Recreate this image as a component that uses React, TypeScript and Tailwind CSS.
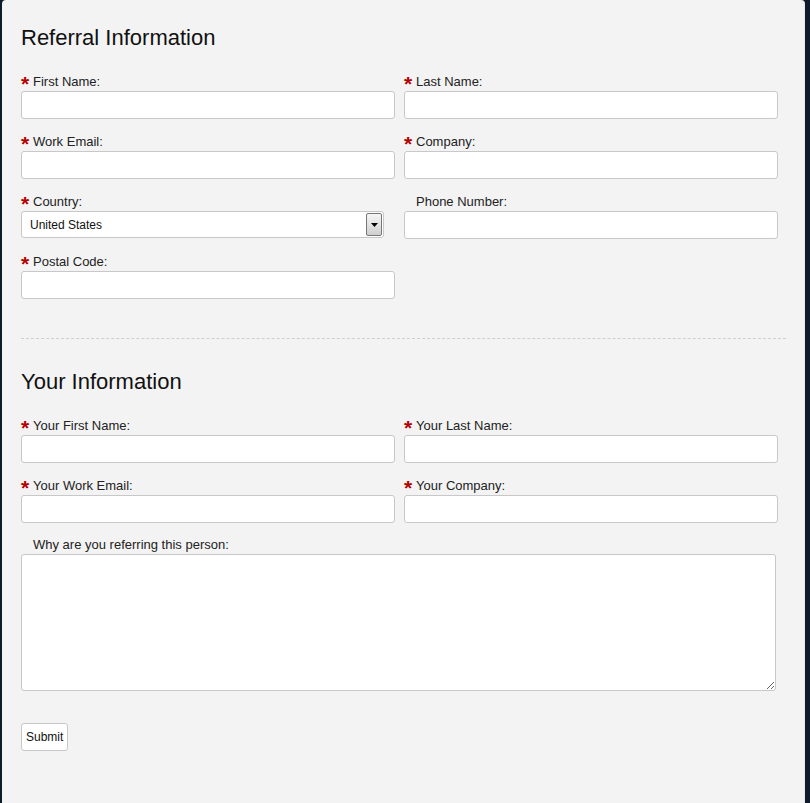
import { ReactNode } from 'react';

const font = { fontFamily: '"Liberation Sans", Arial, sans-serif' };

function Label({ text, required = true }: { text: string; required?: boolean }) {
  return (
    <div className="flex h-[14px] items-center text-[13px] leading-[14px] text-[#222]">
      <span className={`w-[12px] translate-y-[2px] text-[21px] leading-[14px] font-bold text-[#b30000] ${required ? '' : 'invisible'}`}>*</span>
      <span>{text}</span>
    </div>
  );
}

function Field({ label, required = true, children }: { label: string; required?: boolean; children?: ReactNode }) {
  return (
    <div className="flex flex-col gap-[2px]">
      <Label text={label} required={required} />
      {children ?? <input className="h-[28px] w-full rounded-[3px] border border-[#c8c8c8] bg-white outline-none" />}
    </div>
  );
}

function CountrySelect() {
  return (
    <div className="flex h-[27px] w-[363px] items-center justify-between rounded-[3px] border border-[#c8c8c8] bg-white pl-[8px] pr-[1px]">
      <span className="text-[12px] text-[#111]">United States</span>
      <div className="flex h-[23px] w-[16px] items-center justify-center rounded-[2px] border border-[#777] bg-gradient-to-b from-[#f6f6f6] to-[#cfcfcf]">
        <svg width="7" height="4" viewBox="0 0 7 4">
          <path d="M0 0h7L3.5 4z" fill="#000" />
        </svg>
      </div>
    </div>
  );
}

export default function App() {
  return (
    <div className="flex h-[803px] w-[810px] bg-[#0e1b2b] pl-[2px] pr-[5px]" style={font}>
      <div className="flex-1 rounded-t-[4px] border-r border-[#e8ece8] bg-[#f3f3f3] pl-[19px] pr-[18px] pt-[25px]">
        <h2 className="text-[22px] leading-[26px] text-[#111]">Referral Information</h2>

        <div className="mt-[24px] grid w-[757px] grid-cols-2 gap-x-[9px] gap-y-[16px]">
          <Field label="First Name:" />
          <Field label="Last Name:" />
          <Field label="Work Email:" />
          <Field label="Company:" />
          <Field label="Country:">
            <CountrySelect />
          </Field>
          <Field label="Phone Number:" required={false} />
          <Field label="Postal Code:" />
        </div>

        <div className="mt-[39px] border-t border-dashed border-[#cfcfcf]" />

        <h2 className="mt-[30px] text-[22px] leading-[26px] text-[#111]">Your Information</h2>

        <div className="mt-[24px] grid w-[757px] grid-cols-2 gap-x-[9px] gap-y-[16px]">
          <Field label="Your First Name:" />
          <Field label="Your Last Name:" />
          <Field label="Your Work Email:" />
          <Field label="Your Company:" />
        </div>

        <div className="mt-[15px] flex flex-col gap-[2px]">
          <Label text="Why are you referring this person:" required={false} />
          <textarea className="h-[137px] w-[755px] resize rounded-[3px] border border-[#c8c8c8] bg-white outline-none" />
        </div>

        <button className="mt-[32px] h-[28px] rounded-[3px] border border-[#c8c8c8] bg-white px-[4px] text-[12px] text-[#111]">
          Submit
        </button>
      </div>
    </div>
  );
}
